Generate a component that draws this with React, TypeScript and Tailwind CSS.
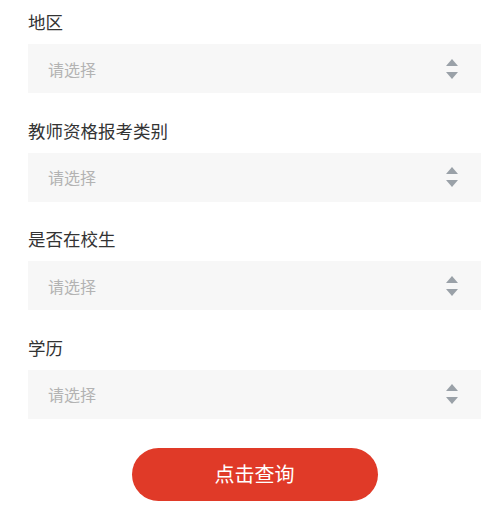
import React from "react";

const fields = ["地区", "教师资格报考类别", "是否在校生", "学历"];

function Arrows() {
  return (
    <svg width="12" height="20" viewBox="0 0 12 20" className="block">
      <polygon points="6,0 12,7 0,7" fill="#9aa1a8" />
      <polygon points="0,13 12,13 6,20" fill="#9aa1a8" />
    </svg>
  );
}

export default function App() {
  return (
    <div
      className="w-[500px] h-[507px] bg-white pl-[28px] pr-[19px] pt-[10px]"
      style={{ fontFamily: '"Microsoft YaHei", "Noto Sans CJK SC", sans-serif' }}
    >
      <div className="flex flex-col gap-[25.6px]">
        {fields.map((f) => (
          <div key={f} className="flex flex-col">
            <div className="text-[17.5px] leading-[24px] text-[#333333] mb-[10px]">{f}</div>
            <div className="h-[49px] bg-[#f7f7f7] flex items-center justify-between pl-[20px] pr-[23px]">
              <span className="text-[16px] text-[#b3b3b3]">请选择</span>
              <Arrows />
            </div>
          </div>
        ))}
      </div>
      <div className="flex justify-center mt-[29px]">
        <button className="w-[246px] h-[53px] rounded-full bg-[#e03a28] text-white text-[20px]">
          点击查询
        </button>
      </div>
    </div>
  );
}
